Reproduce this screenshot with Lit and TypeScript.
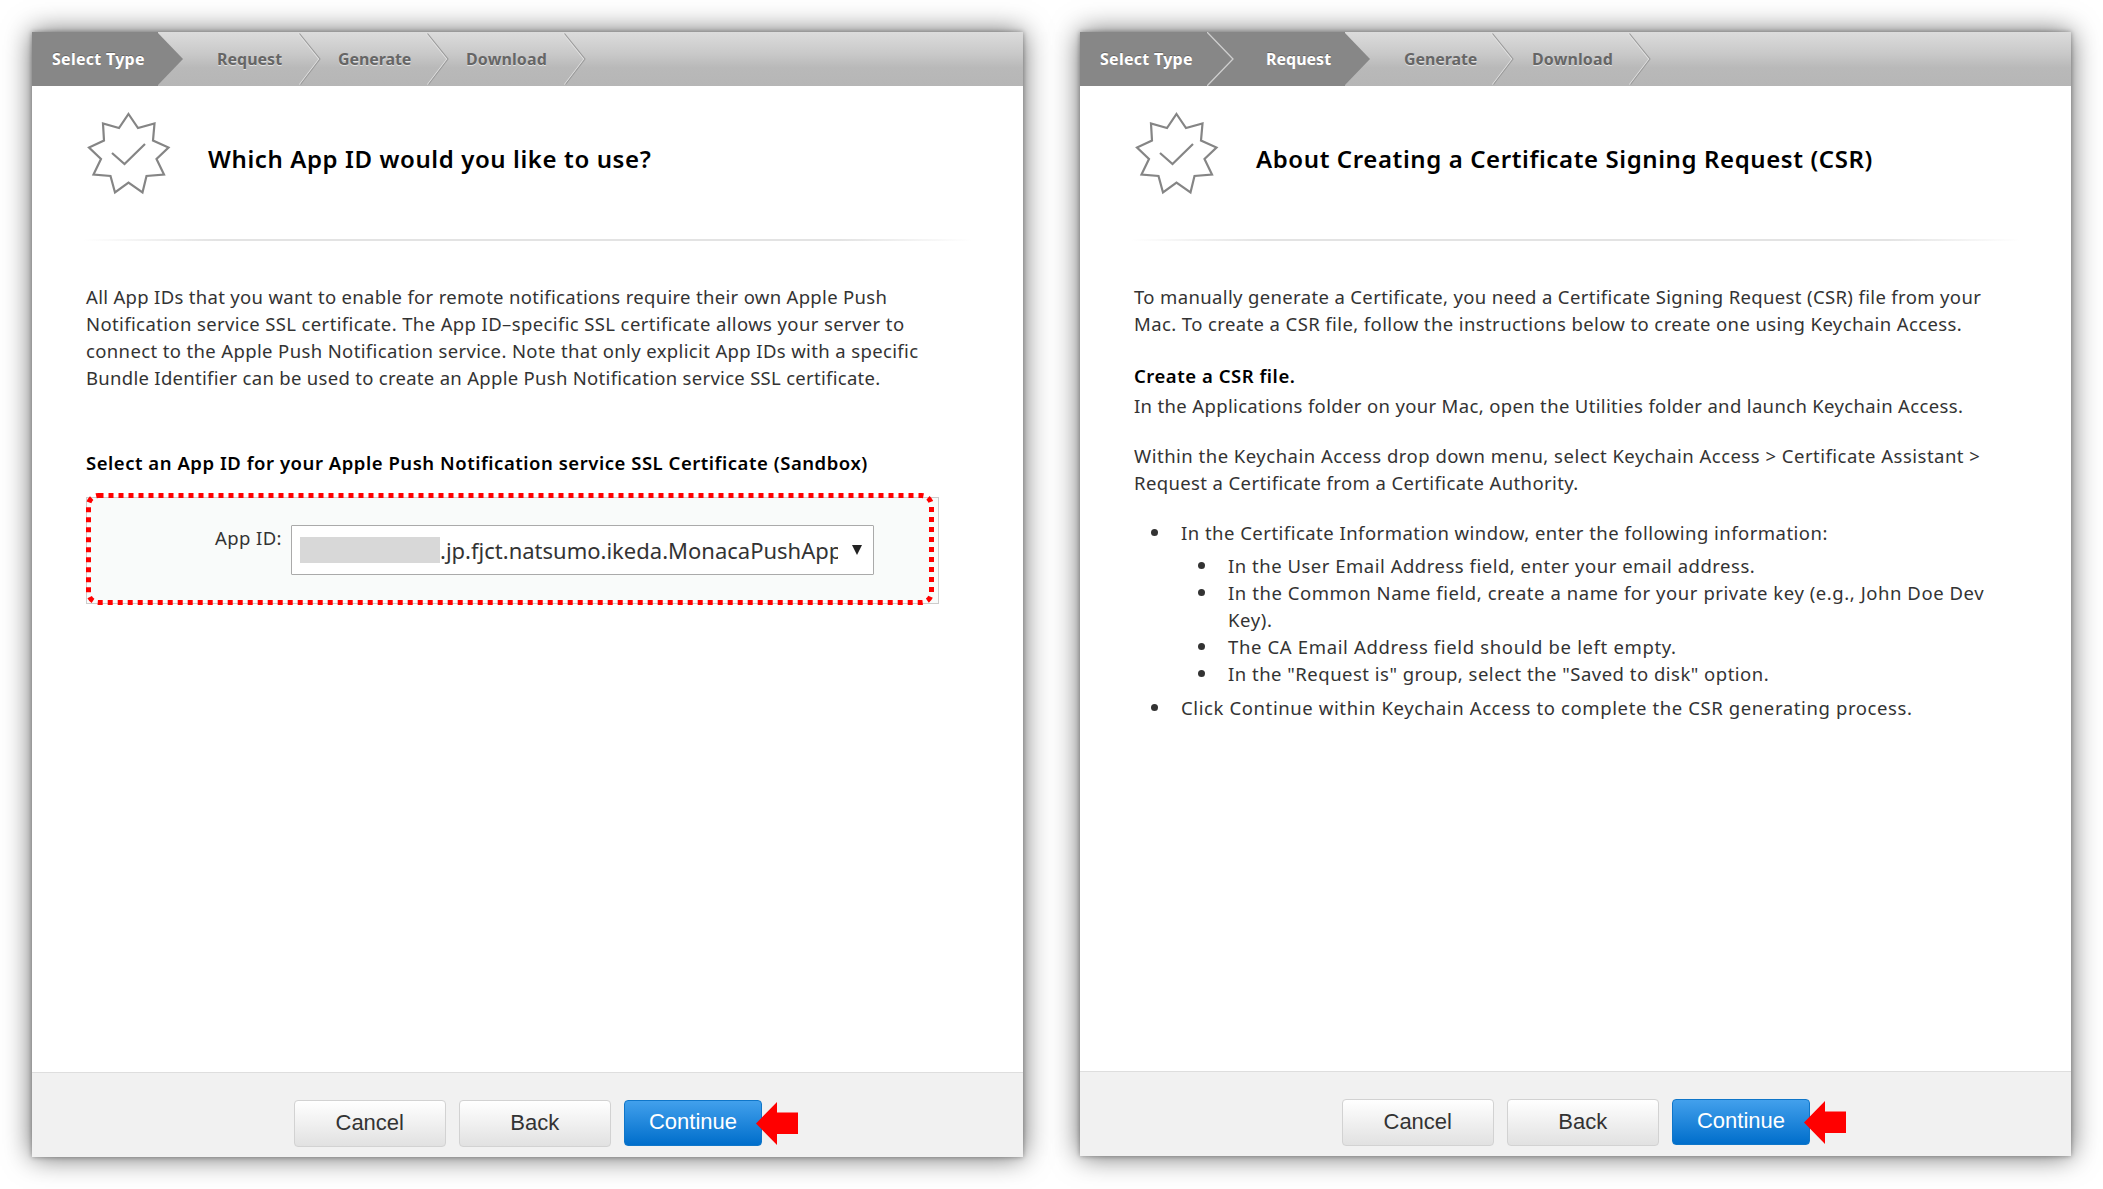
import { LitElement, html, css } from "lit";
import { customElement, property } from "lit/decorators.js";

interface Step {
  label: string;
  width: number;
  inset: number;
  kind: "tip" | "done" | "todo";
  spacing: number;
}

const chevron = (kind: Step["kind"]) => {
  if (kind === "tip")
    return html`<svg class="chev" width="27" height="54" viewBox="0 0 27 54">
      <path d="M0 0L26 27L0 54Z" fill="#878787" />
    </svg>`;
  if (kind === "done")
    return html`<svg class="chev" width="27" height="54" viewBox="0 0 27 54">
      <path d="M0 0H27V54H0Z" fill="#878787" />
      <path d="M0 0L26 27L0 54" fill="none" stroke="#cfcfcf" stroke-width="1.3" />
    </svg>`;
  return html`<svg class="chev" width="23" height="54" viewBox="0 0 23 54">
    <path d="M0.5 1.5L21 27L1.5 52.5" fill="none" stroke="#e2e2e2" stroke-width="1.2" />
    <path d="M1.5 1.5L22 27L2.5 52.5" fill="none" stroke="#9a9a9a" stroke-width="1.1" />
  </svg>`;
};

@customElement("step-bar")
export class StepBar extends LitElement {
  @property({ attribute: false }) steps: Step[] = [];

  static styles = css`
    :host {
      display: flex;
      height: 54px;
      background: linear-gradient(#dcdcdc 0%, #c9c9c9 40%, #b9b9b9 66%, #b6b6b6 100%);
      font: 700 16px/54px "Noto Sans", "Open Sans", sans-serif;
    }
    .step {
      display: flex;
      justify-content: space-between;
      box-sizing: border-box;
      color: #666;
      white-space: nowrap;
      text-shadow: 0 1px 0 #e4e4e4;
    }
    .dark {
      background: linear-gradient(#878787, #878787) no-repeat 0 0 / calc(100% - 26px) 100%;
      color: #fff;
      text-shadow: 0 -1px 0 #666;
    }
    .label {
      width: 0;
    }
    .chev {
      display: block;
      flex: none;
    }
  `;

  render() {
    return this.steps.map(
      (s) => html`<div
        class="step ${s.kind === "todo" ? "" : "dark"}"
        style="width:${s.width}px;padding-left:${s.inset}px;letter-spacing:${s.spacing}px"
      >
        <span class="label">${s.label}</span>${chevron(s.kind)}
      </div>`,
    );
  }
}

@customElement("wizard-panel")
export class WizardPanel extends LitElement {
  @property({ attribute: false }) steps: Step[] = [];
  @property() heading = "";

  static styles = css`
    :host {
      display: flex;
      flex-direction: column;
      background: #fff;
      box-shadow: 0 0 5px rgba(0, 0, 0, 0.35), 0 0 26px rgba(0, 0, 0, 0.6);
    }
    .head {
      display: flex;
      align-items: center;
      height: 132px;
      padding: 2px 0 0 53px;
      box-sizing: border-box;
    }
    .seal {
      flex: none;
      margin-right: 35px;
    }
    h1 {
      margin: 11px 0 0;
      font: 600 24px/32px "Noto Sans", "Open Sans", sans-serif;
      letter-spacing: 0.6px;
      color: #000;
      white-space: nowrap;
    }
    .rule {
      height: 2px;
      margin: 21px 50px 0 50px;
      background: linear-gradient(90deg, #fff, #e3e3e3 15%, #e3e3e3 85%, #fff);
    }
    .body {
      flex: 1;
      padding: 42px 0 0 54px;
    }
    .foot {
      display: flex;
      gap: 13.5px;
      height: 85px;
      box-sizing: border-box;
      padding: 27px 0 0 262px;
      background: #f1f1f1;
      border-top: 1px solid #dedede;
    }
    button {
      width: 151.5px;
      height: 47px;
      border: 1px solid #d2d2d2;
      border-radius: 4px;
      background: linear-gradient(#fff, #e1e1e1);
      font: 22px/1 "Liberation Sans", Arial, sans-serif;
      color: #333;
      padding: 0 0 2px;
    }
    .primary {
      width: 138px;
      height: 46px;
      border-color: #0f76c9;
      background: linear-gradient(#42a0ec, #006ecb);
      color: #fff;
    }
    .arrow {
      margin: 2px 0 0 -19.5px;
    }
  `;

  render() {
    return html`
      <step-bar .steps=${this.steps}></step-bar>
      <div class="head">
        <svg class="seal" width="88" height="84" viewBox="86 111 88 84">
          <path
            d="M129.5 114L139 128L155.500 123.500L154 140.500L169.500 147.500L157.500 159L165 174.500L147.500 176L143.500 192.500L129.500 182.500L116 192.500L111.500 176L94.500 174.500L102 159L90 147.500L105 140.500L104 123.500L120 128Z"
            fill="none"
            stroke="#858585"
            stroke-width="2.2"
          />
          <path d="M113 153L125.500 164L146 144" fill="none" stroke="#858585" stroke-width="2.2" />
        </svg>
        <h1>${this.heading}</h1>
      </div>
      <div class="rule"></div>
      <div class="body"><slot></slot></div>
      <div class="foot">
        <button>Cancel</button>
        <button>Back</button>
        <button class="primary">Continue</button>
        <svg class="arrow" width="42" height="43" viewBox="0 0 42 43">
          <path d="M0 21.500L21 0V10.500H42V32H21V43Z" fill="#f00" />
        </svg>
      </div>
    `;
  }
}

/** One line of copy together with its tracking in pixels. */
type Line = [text: string, spacing: number];

const lines = (...rows: Line[]) =>
  rows.map(([text, spacing]) => html`<div style="letter-spacing:${spacing}px">${text}</div>`);

@customElement("app-root")
export class AppRoot extends LitElement {
  static styles = css`
    :host {
      display: block;
      background: #fff;
      height: 1189px;
      overflow: hidden;
    }
    .page {
      display: flex;
      gap: 57px;
      padding: 32px 0 0 32px;
      align-items: flex-start;
      font: 18.500px/27px "Noto Sans", "Open Sans", sans-serif;
      color: #333;
      white-space: nowrap;
    }
    .left {
      width: 991px;
      height: 1125px;
    }
    .right {
      width: 991px;
      height: 1124px;
    }
    h2 {
      margin: 0;
      font: 600 18.500px/27px "Noto Sans", "Open Sans", sans-serif;
      letter-spacing: 0.53px;
      color: #000;
    }
    .left h2 {
      margin-top: 58px;
    }
    .right h2 {
      margin-top: 25px;
    }
    .field {
      position: relative;
      display: flex;
      width: 853px;
      height: 107px;
      box-sizing: border-box;
      margin-top: 21px;
      padding: 27px 0 0 128px;
      border: 1px solid #ccc;
      background: #f9fbfa;
    }
    .caption {
      width: 76px;
      margin-top: -1px;
      letter-spacing: 0.4px;
    }
    .mark {
      position: absolute;
      left: -1px;
      top: -5px;
    }
    .select {
      display: flex;
      align-items: center;
      box-sizing: border-box;
      width: 583px;
      height: 50px;
      padding-left: 8px;
      border: 1px solid #aaa;
      border-radius: 1px;
      background: #fff;
      font-size: 22px;
    }
    .mask {
      flex: none;
      width: 140px;
      height: 26px;
      background: #d8d8d8;
    }
    .value {
      width: 398px;
      overflow: hidden;
    }
    .caret {
      margin-left: 14px;
    }
    ul {
      margin: 0;
      padding-left: 47px;
      list-style: none;
    }
    ul.outer {
      margin-top: 23px;
    }
    ul.inner {
      margin: 6px 0 7px;
    }
    li::before {
      content: "";
      float: left;
      width: 7px;
      height: 7px;
      border-radius: 50%;
      margin: 10px 0 0 -30px;
      background: #333;
    }
    p {
      margin: 0;
    }
    .near {
      margin-top: 3px;
    }
    .gap {
      margin-top: 23px;
    }
  `;

  render() {
    const leftSteps: Step[] = [
      { label: "Select Type", width: 152, inset: 20, kind: "tip", spacing: 0.28 },
      { label: "Request", width: 137, inset: 33, kind: "todo", spacing: 0 },
      { label: "Generate", width: 128, inset: 17, kind: "todo", spacing: -0.1 },
      { label: "Download", width: 137, inset: 17, kind: "todo", spacing: 0.12 },
    ];
    const rightSteps: Step[] = [
      { label: "Select Type", width: 154, inset: 20, kind: "done", spacing: 0.28 },
      { label: "Request", width: 137, inset: 32, kind: "tip", spacing: 0 },
      { label: "Generate", width: 143, inset: 33, kind: "todo", spacing: -0.1 },
      { label: "Download", width: 137, inset: 18, kind: "todo", spacing: 0.12 },
    ];
    return html`<div class="page">
      <wizard-panel class="left" .steps=${leftSteps} heading="Which App ID would you like to use?">
        <p>
          ${lines(
            ["All App IDs that you want to enable for remote notifications require their own Apple Push", 0.316],
            ["Notification service SSL certificate. The App ID–specific SSL certificate allows your server to", 0.38],
            ["connect to the Apple Push Notification service. Note that only explicit App IDs with a specific", 0.367],
            ["Bundle Identifier can be used to create an Apple Push Notification service SSL certificate.", 0.295],
          )}
        </p>
        <h2>Select an App ID for your Apple Push Notification service SSL Certificate (Sandbox)</h2>
        <div class="field">
          <span class="caption">App ID:</span>
          <div class="select">
            <span class="mask"></span><span class="value">.jp.fjct.natsumo.ikeda.MonacaPushApp</span>
            <svg class="caret" width="10" height="10" viewBox="0 0 10 10"><path d="M0 0H10L5 10Z" fill="#222" /></svg>
          </div>
          <svg class="mark" width="848" height="114" viewBox="0 0 848 114">
            <rect x="2.500" y="2.500" width="843" height="107" rx="10" fill="none" stroke="#f00" stroke-width="5" stroke-dasharray="5 5" />
          </svg>
        </div>
      </wizard-panel>
      <wizard-panel class="right" .steps=${rightSteps} heading="About Creating a Certificate Signing Request (CSR)">
        <p>
          ${lines(
            ["To manually generate a Certificate, you need a Certificate Signing Request (CSR) file from your", 0.355],
            ["Mac. To create a CSR file, follow the instructions below to create one using Keychain Access.", 0.395],
          )}
        </p>
        <h2>Create a CSR file.</h2>
        <div class="near">
          ${lines(["In the Applications folder on your Mac, open the Utilities folder and launch Keychain Access.", 0.345])}
        </div>
        <div class="gap">
          ${lines(
            ["Within the Keychain Access drop down menu, select Keychain Access > Certificate Assistant >", 0.49],
            ["Request a Certificate from a Certificate Authority.", 0.38],
          )}
        </div>
        <ul class="outer">
          <li>
            ${lines(["In the Certificate Information window, enter the following information:", 0.475])}
            <ul class="inner">
              <li>${lines(["In the User Email Address field, enter your email address.", 0.51])}</li>
              <li>
                ${lines(
                  ["In the Common Name field, create a name for your private key (e.g., John Doe Dev", 0.555],
                  ["Key).", 0.6],
                )}
              </li>
              <li>${lines(["The CA Email Address field should be left empty.", 0.64])}</li>
              <li>${lines(['In the "Request is" group, select the "Saved to disk" option.', 0.49])}</li>
            </ul>
          </li>
          <li>${lines(["Click Continue within Keychain Access to complete the CSR generating process.", 0.61])}</li>
        </ul>
      </wizard-panel>
    </div>`;
  }
}
